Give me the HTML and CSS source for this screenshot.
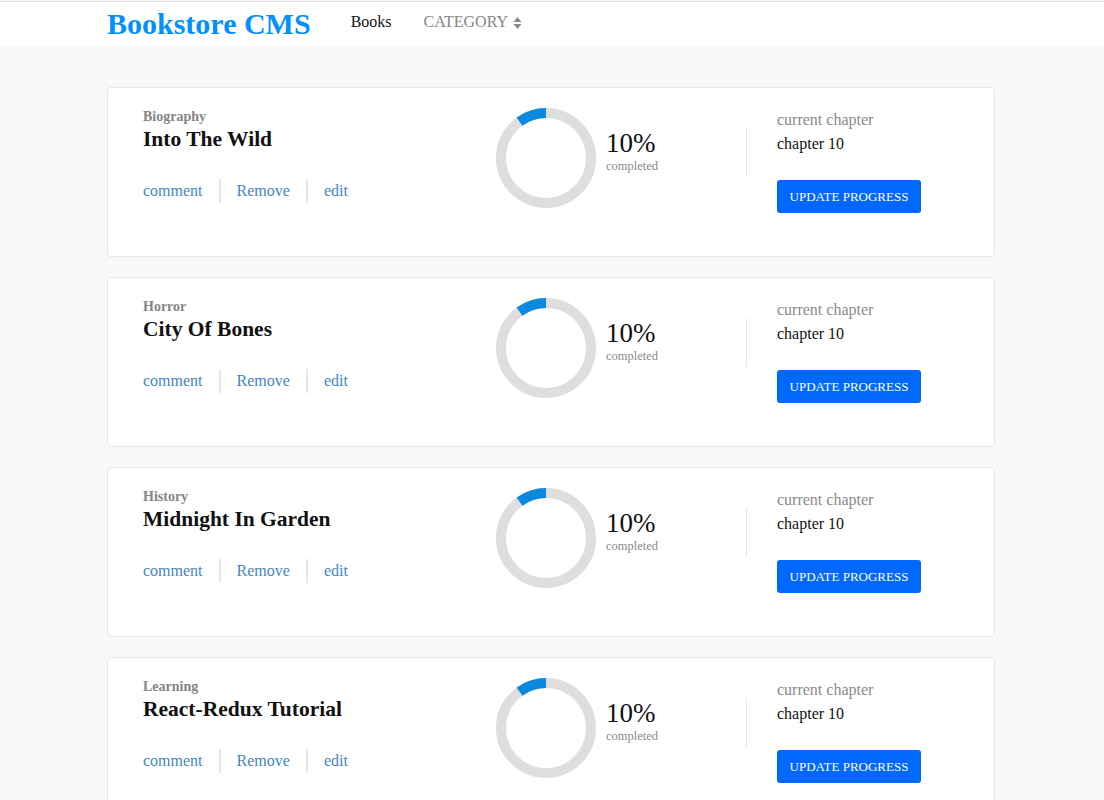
FILE: index.html
```html
<!DOCTYPE html>
<html lang="en">
<head>
<meta charset="utf-8">
<title>Bookstore CMS</title>
<link rel="stylesheet" href="styles.css">
</head>
<body>
<header class="header">
  <div class="header-inner">
    <h1 class="logo">Bookstore CMS</h1>
    <nav class="nav">
      <a class="nav-link" href="#">Books</a>
      <span class="nav-category">CATEGORY
        <svg class="sort-icon" width="9" height="16" viewBox="0 0 9 16"><path d="M4.5 2 L8.5 7 H0.5 Z M4.5 14 L8.5 9 H0.5 Z" fill="#8a8a8a"/></svg>
      </span>
    </nav>
  </div>
</header>
<main class="books">
  <div class="card">
    <div class="info">
      <div class="category">Biography</div>
      <div class="title">Into The Wild</div>
      <div class="actions"><a class="action" href="#">comment</a><a class="action" href="#">Remove</a><a class="action" href="#">edit</a></div>
    </div>
    <div class="progress">
      <svg class="ring" width="100" height="100" viewBox="0 0 100 100"><circle cx="50" cy="50" r="45" fill="none" stroke="#dedede" stroke-width="10"/><circle cx="50" cy="50" r="45" fill="none" stroke="#0a89de" stroke-width="10" stroke-dasharray="28.27 282.74" transform="rotate(-90 50 50) scale(1 -1) translate(0 -100)"/></svg>
      <div class="percent"><div class="pct">10%</div><div class="completed">completed</div></div>
    </div>
    <div class="divider"></div>
    <div class="chapter">
      <div class="chapter-label">current chapter</div>
      <div class="chapter-value">chapter 10</div>
      <button class="update">UPDATE PROGRESS</button>
    </div>
  </div>
  <div class="card">
    <div class="info">
      <div class="category">Horror</div>
      <div class="title">City Of Bones</div>
      <div class="actions"><a class="action" href="#">comment</a><a class="action" href="#">Remove</a><a class="action" href="#">edit</a></div>
    </div>
    <div class="progress">
      <svg class="ring" width="100" height="100" viewBox="0 0 100 100"><circle cx="50" cy="50" r="45" fill="none" stroke="#dedede" stroke-width="10"/><circle cx="50" cy="50" r="45" fill="none" stroke="#0a89de" stroke-width="10" stroke-dasharray="28.27 282.74" transform="rotate(-90 50 50) scale(1 -1) translate(0 -100)"/></svg>
      <div class="percent"><div class="pct">10%</div><div class="completed">completed</div></div>
    </div>
    <div class="divider"></div>
    <div class="chapter">
      <div class="chapter-label">current chapter</div>
      <div class="chapter-value">chapter 10</div>
      <button class="update">UPDATE PROGRESS</button>
    </div>
  </div>
  <div class="card">
    <div class="info">
      <div class="category">History</div>
      <div class="title">Midnight In Garden</div>
      <div class="actions"><a class="action" href="#">comment</a><a class="action" href="#">Remove</a><a class="action" href="#">edit</a></div>
    </div>
    <div class="progress">
      <svg class="ring" width="100" height="100" viewBox="0 0 100 100"><circle cx="50" cy="50" r="45" fill="none" stroke="#dedede" stroke-width="10"/><circle cx="50" cy="50" r="45" fill="none" stroke="#0a89de" stroke-width="10" stroke-dasharray="28.27 282.74" transform="rotate(-90 50 50) scale(1 -1) translate(0 -100)"/></svg>
      <div class="percent"><div class="pct">10%</div><div class="completed">completed</div></div>
    </div>
    <div class="divider"></div>
    <div class="chapter">
      <div class="chapter-label">current chapter</div>
      <div class="chapter-value">chapter 10</div>
      <button class="update">UPDATE PROGRESS</button>
    </div>
  </div>
  <div class="card">
    <div class="info">
      <div class="category">Learning</div>
      <div class="title">React-Redux Tutorial</div>
      <div class="actions"><a class="action" href="#">comment</a><a class="action" href="#">Remove</a><a class="action" href="#">edit</a></div>
    </div>
    <div class="progress">
      <svg class="ring" width="100" height="100" viewBox="0 0 100 100"><circle cx="50" cy="50" r="45" fill="none" stroke="#dedede" stroke-width="10"/><circle cx="50" cy="50" r="45" fill="none" stroke="#0a89de" stroke-width="10" stroke-dasharray="28.27 282.74" transform="rotate(-90 50 50) scale(1 -1) translate(0 -100)"/></svg>
      <div class="percent"><div class="pct">10%</div><div class="completed">completed</div></div>
    </div>
    <div class="divider"></div>
    <div class="chapter">
      <div class="chapter-label">current chapter</div>
      <div class="chapter-value">chapter 10</div>
      <button class="update">UPDATE PROGRESS</button>
    </div>
  </div>
</main>
</body>
</html>
```
FILE: styles.css
```css
* { box-sizing: border-box; }
html { background: #ffffff; }
body {
  margin: 0;
  padding-top: 1px;
  background: #f8f8f8;
  font-family: "Liberation Serif", "Times New Roman", serif;
  color: #111;
}
.header {
  background: #fff;
  border-top: 1px solid #dcdcdc;
  height: 45px;
}
.header-inner {
  margin-left: 107px;
  display: flex;
  align-items: flex-start;
}
.logo {
  margin: 3px 0 0 0;
  font-size: 30px;
  line-height: 38px;
  font-weight: bold;
  color: #0290ff;
}
.nav {
  display: flex;
  gap: 32px;
  margin-left: 40px;
  margin-top: 10px;
  font-size: 16px;
  line-height: 20px;
}
.nav-link { color: #111; text-decoration: none; }
.nav-category {
  color: #858585;
  display: flex;
  align-items: center;
  gap: 5px;
}
.sort-icon { display: block; margin-top: 1px; }
.books {
  margin: 41px 0 0 107px;
  width: 888px;
  display: flex;
  flex-direction: column;
  gap: 20px;
}
.card {
  background: #fff;
  border: 1px solid #e6e6e6;
  border-radius: 4px;
  height: 170px;
  padding: 20px 0 0 35px;
  display: flex;
  align-items: flex-start;
}
.info { width: 353px; margin-top: 1px; }
.category {
  font-size: 14px;
  line-height: 16px;
  font-weight: bold;
  color: #858585;
}
.title {
  margin-top: 1px;
  font-size: 21.5px;
  line-height: 26px;
  font-weight: bold;
  color: #111;
}
.actions {
  display: flex;
  margin-top: 27px;
  height: 24px;
  align-items: center;
}
.action {
  color: #4386bf;
  text-decoration: none;
  font-size: 16px;
  line-height: 24px;
  padding: 0 16px 0 16px;
}
.action:first-child { padding-left: 0; }
.action + .action { border-left: 2px solid #e6e6e6; }
.progress {
  width: 250px;
  display: flex;
  align-items: flex-start;
}
.ring { display: block; flex: none; }
.percent { margin-left: 10px; margin-top: 20px; }
.pct {
  font-size: 27px;
  line-height: 30px;
  color: #111;
}
.completed {
  margin-top: 1px;
  font-size: 12.5px;
  line-height: 14px;
  color: #8a8a8a;
}
.divider {
  width: 1px;
  height: 49px;
  margin-top: 20px;
  background: #e6e6e6;
}
.chapter { padding-left: 30px; }
.chapter-label {
  margin-top: 3px;
  font-size: 16px;
  line-height: 18px;
  color: #8a8a8a;
}
.chapter-value {
  margin-top: 6px;
  font-size: 16px;
  line-height: 18px;
  color: #111;
}
.update {
  margin-top: 27px;
  width: 144px;
  height: 33px;
  border: none;
  border-radius: 3px;
  background: #0068ff;
  color: #fff;
  font-family: "Liberation Serif", "Times New Roman", serif;
  font-size: 13px;
  padding: 0;
  cursor: pointer;
}
```
